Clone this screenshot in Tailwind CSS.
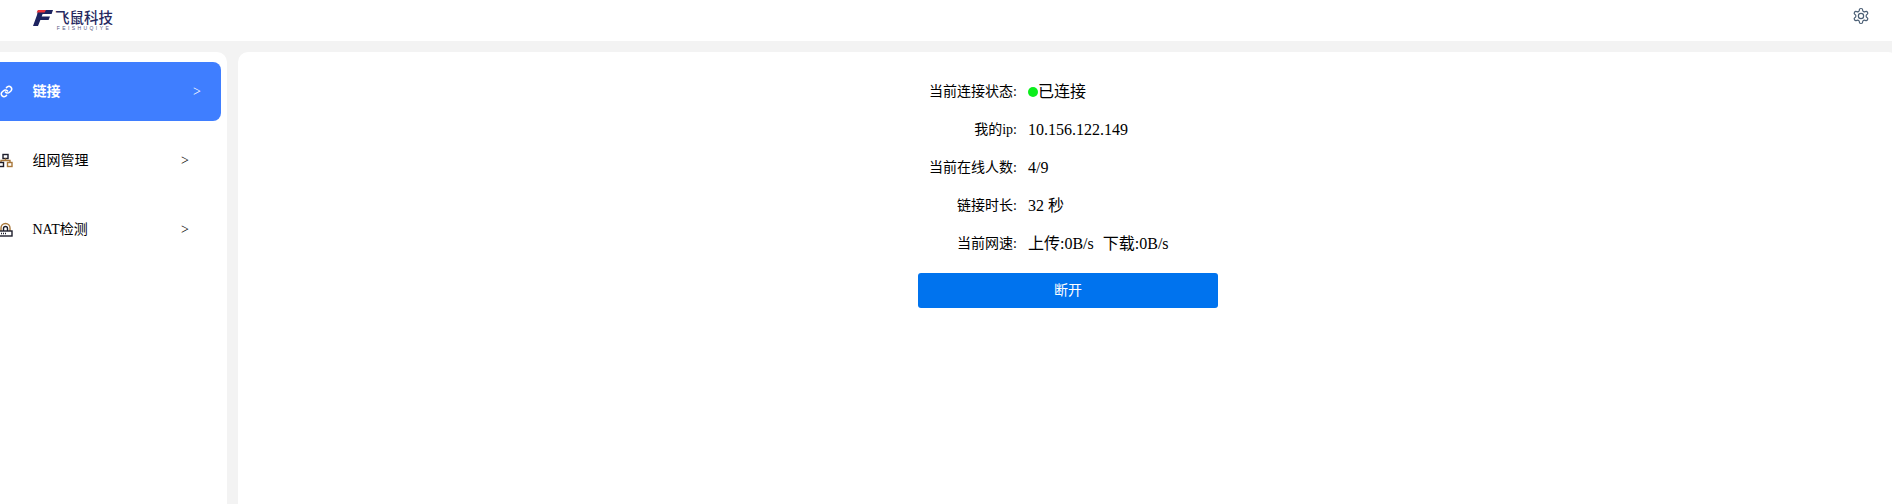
<!DOCTYPE html>
<html lang="zh-CN">
<head>
  <meta charset="UTF-8">
  <meta name="viewport" content="width=device-width, initial-scale=1.0">
  <title>飞鼠科技</title>
  <script src="https://cdn.jsdelivr.net/npm/@tailwindcss/browser@4"></script>
</head>
<body class="h-[504px] overflow-hidden bg-[#f3f3f3] text-black font-['Liberation_Serif','Noto_Sans_CJK_SC',serif]">

  <!-- header -->
  <header class="h-[41px] bg-white flex items-center justify-between pl-[33px] pr-[22px]">
    <div class="flex items-start h-[32px] pt-[4px]">
      <svg class="w-[20px] h-[18px] mt-[0px]" viewBox="0 0 20 18">
        <path d="M5 1H20L18.600 5H9.600L8.700 7.400H17L15.600 11H7.400L5 17H0L4 6Z" fill="#1e2460"/>
        <path d="M5 1H13L11.600 3.400H3.600Z" fill="#e8333a"/>
      </svg>
      <div class="ml-[2px] flex flex-col items-center font-['Noto_Sans_CJK_SC',sans-serif] text-[#27295f]">
        <span class="text-[14.500px] leading-[15px] font-medium">飞鼠科技</span>
        <span class="text-[5px] leading-[6px] mt-[1px] tracking-[2.400px] text-[#55577f] font-['Liberation_Sans',sans-serif]">FEISHUQIYE</span>
      </div>
    </div>
    <svg class="w-[18px] h-[18px] -mt-[10px]" viewBox="0 0 24 24" fill="none" stroke="#4b5f75" stroke-width="1.600" stroke-linecap="round" stroke-linejoin="round">
      <path d="M12.220 2h-.440a2 2 0 0 0-2 2v.180a2 2 0 0 1-1 1.730l-.430.250a2 2 0 0 1-2 0l-.150-.080a2 2 0 0 0-2.730.730l-.220.380a2 2 0 0 0 .730 2.730l.150.100a2 2 0 0 1 1 1.720v.510a2 2 0 0 1-1 1.740l-.150.090a2 2 0 0 0-.730 2.730l.220.380a2 2 0 0 0 2.730.730l.150-.080a2 2 0 0 1 2 0l.430.250a2 2 0 0 1 1 1.730V20a2 2 0 0 0 2 2h.440a2 2 0 0 0 2-2v-.180a2 2 0 0 1 1-1.730l.430-.250a2 2 0 0 1 2 0l.150.080a2 2 0 0 0 2.730-.730l.220-.390a2 2 0 0 0-.730-2.730l-.150-.080a2 2 0 0 1-1-1.740v-.500a2 2 0 0 1 1-1.740l.150-.090a2 2 0 0 0 .730-2.730l-.220-.380a2 2 0 0 0-2.730-.730l-.150.080a2 2 0 0 1-2 0l-.430-.250a2 2 0 0 1-1-1.730V4a2 2 0 0 0-2-2z"/>
      <circle cx="12" cy="12" r="3.500"/>
    </svg>
  </header>

  <div class="flex gap-[11px] pt-[11px] h-[480px]">
    <!-- sidebar -->
    <aside class="w-[247px] -ml-[20px] shrink-0 bg-white rounded-[10px] pt-[10px] pl-[6px] pr-[6px] text-[14px]">
      <a class="h-[59px] bg-[#3f7eff] rounded-[8px] flex items-center text-white font-bold">
        <svg class="ml-[14px] w-[13px] h-[13px] shrink-0" viewBox="0 0 24 24" fill="none" stroke="#fff" stroke-width="2.800" stroke-linecap="round" stroke-linejoin="round">
          <path d="M10 13a5 5 0 0 0 7.500.500l3-3a5 5 0 0 0-7-7l-1.700 1.700"/>
          <path d="M14 11a5 5 0 0 0-7.500-.500l-3 3a5 5 0 0 0 7 7l1.700-1.700"/>
        </svg>
        <span class="ml-[19.500px]">链接</span>
        <span class="ml-auto mr-[20px] font-normal">&gt;</span>
      </a>
      <a class="h-[59px] mt-[10px] flex items-center">
        <svg class="ml-[12px] w-[15px] h-[15px] shrink-0" viewBox="0 0 15 15" fill="none" stroke="#1d1d2b" stroke-width="1.400">
          <rect x="5" y="1.500" width="5" height="4"/>
          <path d="M7.500 5.500V7.500M3 9.500V7.500H12V9.500" stroke="#a8773a"/>
          <rect x="1" y="9.500" width="4.500" height="4"/>
          <rect x="9.500" y="9.500" width="4.500" height="4" stroke="#a8773a"/>
        </svg>
        <span class="ml-[19.500px]">组网管理</span>
        <span class="ml-auto mr-[32px]">&gt;</span>
      </a>
      <a class="h-[59px] mt-[10px] flex items-center">
        <svg class="ml-[12px] w-[15px] h-[15px] shrink-0" viewBox="0 0 15 15" fill="none" stroke="#1d1d2b" stroke-width="1.400">
          <path d="M3 9V6a4.500 4.500 0 0 1 9 0V9" stroke="#a8773a"/>
          <path d="M5.500 9V6.500a2 2 0 0 1 4 0V9"/>
          <rect x="1" y="9" width="13" height="5"/>
          <path d="M3 11.500H8" stroke-dasharray="1 1"/>
        </svg>
        <span class="ml-[19.500px]">NAT检测</span>
        <span class="ml-auto mr-[32px]">&gt;</span>
      </a>
    </aside>

    <!-- main panel -->
    <main class="w-[1660px] shrink-0 bg-white rounded-[10px] pt-[20px] flex justify-center">
      <div class="w-[300px] text-[16px]">
        <div class="flex items-center h-[38px]">
          <span class="w-[99px] text-right text-[14px]">当前连接状态:</span>
          <span class="ml-[11px] mt-[1px] flex items-center"><i class="w-[10px] h-[10px] rounded-full bg-[#0bee1b]"></i>已连接</span>
        </div>
        <div class="flex items-center h-[38px]">
          <span class="w-[99px] text-right text-[14px]">我的ip:</span>
          <span class="ml-[11px] mt-[1px]">10.156.122.149</span>
        </div>
        <div class="flex items-center h-[38px]">
          <span class="w-[99px] text-right text-[14px]">当前在线人数:</span>
          <span class="ml-[11px] mt-[1px]">4/9</span>
        </div>
        <div class="flex items-center h-[38px]">
          <span class="w-[99px] text-right text-[14px]">链接时长:</span>
          <span class="ml-[11px] mt-[1px]">32 秒</span>
        </div>
        <div class="flex items-center h-[38px]">
          <span class="w-[99px] text-right text-[14px]">当前网速:</span>
          <span class="ml-[11px] mt-[1px]">上传:0B/s</span>
          <span class="ml-[9px] mt-[1px]">下载:0B/s</span>
        </div>
        <button class="mt-[11px] w-full h-[35px] bg-[#0073ee] text-white text-[14px] rounded-[3px]">断开</button>
      </div>
    </main>
  </div>
</body>
</html>
